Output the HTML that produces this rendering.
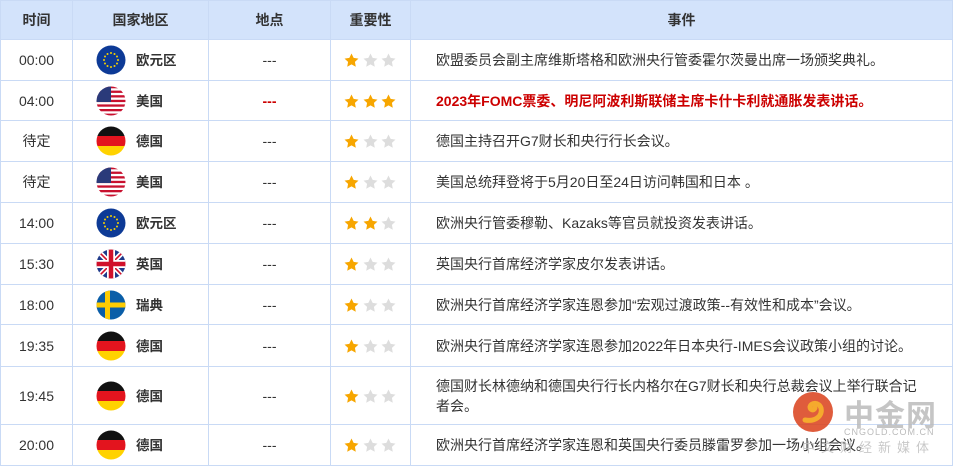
<!DOCTYPE html>
<html><head><meta charset="utf-8"><style>
body{margin:0;background:#fff;font-family:"Liberation Sans","Noto Sans CJK SC",sans-serif;font-size:14px;color:#333;width:954px;height:467px;overflow:hidden;position:relative}
table{border-collapse:collapse;table-layout:fixed;position:absolute;left:0;top:0}
td,th{border:1px solid #c9daf5;padding:0;text-align:center;vertical-align:middle}
th{background:#d3e3fb;font-weight:bold;color:#333;height:38px;font-size:14px}
td.ev{text-align:left;padding-left:25px;padding-right:28px;line-height:20px}
.c{display:flex;align-items:center;padding-left:23px;height:30px}
.c svg{margin-right:10px;flex:none}
.c b{font-weight:bold;color:#333;font-size:13.5px;line-height:30px;padding-top:2px}
.st{display:inline-block;vertical-align:middle}
.red{color:#c00;font-weight:bold}
.logo{position:absolute;left:792px;top:391px}
</style></head><body>
<svg width="0" height="0" style="position:absolute"><defs>
<clipPath id="cc"><circle cx="15" cy="15" r="14.5"/></clipPath>
<symbol id="s" viewBox="0 0 14 14"><path d="M7 .5l2 4.1 4.5.6-3.3 3.1.8 4.5L7 10.6 3 12.8l.8-4.5L.5 5.2 5 4.6z"/></symbol>
<symbol id="eu" viewBox="0 0 30 30"><circle cx="15" cy="15" r="14.5" fill="#0d3a96"/><g fill="#f4d000"><circle cx="15" cy="8" r="1"/><circle cx="15" cy="22" r="1"/><circle cx="8" cy="15" r="1"/><circle cx="22" cy="15" r="1"/><circle cx="18.5" cy="9" r="1"/><circle cx="11.5" cy="9" r="1"/><circle cx="18.5" cy="21" r="1"/><circle cx="11.5" cy="21" r="1"/><circle cx="21" cy="11.5" r="1"/><circle cx="9" cy="11.5" r="1"/><circle cx="21" cy="18.5" r="1"/><circle cx="9" cy="18.5" r="1"/></g></symbol>
<symbol id="us" viewBox="0 0 30 30"><g clip-path="url(#cc)"><rect width="30" height="30" fill="#fff"/><g fill="#c8102e"><rect y="0" width="30" height="2.3"/><rect y="4.6" width="30" height="2.3"/><rect y="9.2" width="30" height="2.3"/><rect y="13.8" width="30" height="2.3"/><rect y="18.4" width="30" height="2.3"/><rect y="23" width="30" height="2.3"/><rect y="27.6" width="30" height="2.4"/></g><rect width="15" height="16" fill="#2a3a7a"/></g></symbol>
<symbol id="de" viewBox="0 0 30 30"><g clip-path="url(#cc)"><rect width="30" height="10" fill="#111"/><rect y="10" width="30" height="10" fill="#e3141e"/><rect y="20" width="30" height="10" fill="#ffd200"/></g></symbol>
<symbol id="gb" viewBox="0 0 30 30"><g clip-path="url(#cc)"><rect width="30" height="30" fill="#1f3a8a"/><path d="M0 0L30 30M30 0L0 30" stroke="#fff" stroke-width="5"/><path d="M0 0L30 30M30 0L0 30" stroke="#d0102a" stroke-width="1.6"/><path d="M15 0V30M0 15H30" stroke="#fff" stroke-width="8"/><path d="M15 0V30M0 15H30" stroke="#d0102a" stroke-width="4.5"/></g></symbol>
<symbol id="se" viewBox="0 0 30 30"><g clip-path="url(#cc)"><rect width="30" height="30" fill="#0a5ea8"/><rect x="9" width="5" height="30" fill="#fecc02"/><rect y="12.5" width="30" height="5" fill="#fecc02"/></g></symbol>
</defs></svg>
<table>
<colgroup><col style="width:72px"><col style="width:136px"><col style="width:122px"><col style="width:80px"><col style="width:542px"></colgroup>
<tr><th>时间</th><th>国家地区</th><th>地点</th><th>重要性</th><th>事件</th></tr>
<tr style="height:41px"><td>00:00</td><td><div class="c"><svg width="30" height="30"><use href="#eu"/></svg><b>欧元区</b></div></td><td>---</td><td><svg class="st" width="54" height="15"><use href="#s" x="0" width="15" height="15" fill="#f7a600"/><use href="#s" x="19" width="15" height="15" fill="#ddd"/><use href="#s" x="37" width="15" height="15" fill="#ddd"/></svg></td><td class="ev">欧盟委员会副主席维斯塔格和欧洲央行管委霍尔茨曼出席一场颁奖典礼。</td></tr>
<tr style="height:40px"><td>04:00</td><td><div class="c"><svg width="30" height="30"><use href="#us"/></svg><b>美国</b></div></td><td class="red">---</td><td><svg class="st" width="54" height="15"><use href="#s" x="0" width="15" height="15" fill="#f7a600"/><use href="#s" x="19" width="15" height="15" fill="#f7a600"/><use href="#s" x="37" width="15" height="15" fill="#f7a600"/></svg></td><td class="ev red">2023年FOMC票委、明尼阿波利斯联储主席卡什卡利就通胀发表讲话。</td></tr>
<tr style="height:41px"><td>待定</td><td><div class="c"><svg width="30" height="30"><use href="#de"/></svg><b>德国</b></div></td><td>---</td><td><svg class="st" width="54" height="15"><use href="#s" x="0" width="15" height="15" fill="#f7a600"/><use href="#s" x="19" width="15" height="15" fill="#ddd"/><use href="#s" x="37" width="15" height="15" fill="#ddd"/></svg></td><td class="ev">德国主持召开G7财长和央行行长会议。</td></tr>
<tr style="height:41px"><td>待定</td><td><div class="c"><svg width="30" height="30"><use href="#us"/></svg><b>美国</b></div></td><td>---</td><td><svg class="st" width="54" height="15"><use href="#s" x="0" width="15" height="15" fill="#f7a600"/><use href="#s" x="19" width="15" height="15" fill="#ddd"/><use href="#s" x="37" width="15" height="15" fill="#ddd"/></svg></td><td class="ev">美国总统拜登将于5月20日至24日访问韩国和日本 。</td></tr>
<tr style="height:41px"><td>14:00</td><td><div class="c"><svg width="30" height="30"><use href="#eu"/></svg><b>欧元区</b></div></td><td>---</td><td><svg class="st" width="54" height="15"><use href="#s" x="0" width="15" height="15" fill="#f7a600"/><use href="#s" x="19" width="15" height="15" fill="#f7a600"/><use href="#s" x="37" width="15" height="15" fill="#ddd"/></svg></td><td class="ev">欧洲央行管委穆勒、Kazaks等官员就投资发表讲话。</td></tr>
<tr style="height:41px"><td>15:30</td><td><div class="c"><svg width="30" height="30"><use href="#gb"/></svg><b>英国</b></div></td><td>---</td><td><svg class="st" width="54" height="15"><use href="#s" x="0" width="15" height="15" fill="#f7a600"/><use href="#s" x="19" width="15" height="15" fill="#ddd"/><use href="#s" x="37" width="15" height="15" fill="#ddd"/></svg></td><td class="ev">英国央行首席经济学家皮尔发表讲话。</td></tr>
<tr style="height:40px"><td>18:00</td><td><div class="c"><svg width="30" height="30"><use href="#se"/></svg><b>瑞典</b></div></td><td>---</td><td><svg class="st" width="54" height="15"><use href="#s" x="0" width="15" height="15" fill="#f7a600"/><use href="#s" x="19" width="15" height="15" fill="#ddd"/><use href="#s" x="37" width="15" height="15" fill="#ddd"/></svg></td><td class="ev">欧洲央行首席经济学家连恩参加“宏观过渡政策--有效性和成本”会议。</td></tr>
<tr style="height:42px"><td>19:35</td><td><div class="c"><svg width="30" height="30"><use href="#de"/></svg><b>德国</b></div></td><td>---</td><td><svg class="st" width="54" height="15"><use href="#s" x="0" width="15" height="15" fill="#f7a600"/><use href="#s" x="19" width="15" height="15" fill="#ddd"/><use href="#s" x="37" width="15" height="15" fill="#ddd"/></svg></td><td class="ev">欧洲央行首席经济学家连恩参加2022年日本央行-IMES会议政策小组的讨论。</td></tr>
<tr style="height:58px"><td>19:45</td><td><div class="c"><svg width="30" height="30"><use href="#de"/></svg><b>德国</b></div></td><td>---</td><td><svg class="st" width="54" height="15"><use href="#s" x="0" width="15" height="15" fill="#f7a600"/><use href="#s" x="19" width="15" height="15" fill="#ddd"/><use href="#s" x="37" width="15" height="15" fill="#ddd"/></svg></td><td class="ev">德国财长林德纳和德国央行行长内格尔在G7财长和央行总裁会议上举行联合记者会。</td></tr>
<tr style="height:41px"><td>20:00</td><td><div class="c"><svg width="30" height="30"><use href="#de"/></svg><b>德国</b></div></td><td>---</td><td><svg class="st" width="54" height="15"><use href="#s" x="0" width="15" height="15" fill="#f7a600"/><use href="#s" x="19" width="15" height="15" fill="#ddd"/><use href="#s" x="37" width="15" height="15" fill="#ddd"/></svg></td><td class="ev">欧洲央行首席经济学家连恩和英国央行委员滕雷罗参加一场小组会议。</td></tr>
</table>
<div class="logo">
<svg width="42" height="42" style="position:absolute;left:0;top:0"><circle cx="21" cy="21" r="20" fill="#d9401a" opacity=".85"/><path d="M13 29c10 2 18-4 16-12-2-6-10-6-11-1 0 3 4 4 5 1" stroke="#f7b32b" stroke-width="5" fill="none" stroke-linecap="round" opacity=".9"/></svg>
<div style="position:absolute;left:52px;top:0px;font-size:30px;font-weight:bold;color:#bbb;letter-spacing:1px;white-space:nowrap;opacity:.85">中金网</div>
<div style="position:absolute;left:52px;top:36px;font-size:9px;color:#bbb;letter-spacing:1px;white-space:nowrap">CNGOLD.COM.CN</div>
<div style="position:absolute;left:10px;top:46px;font-size:13px;color:#bbb;letter-spacing:6px;white-space:nowrap;opacity:.8">中文财经新媒体</div>
</div>
</body></html>
